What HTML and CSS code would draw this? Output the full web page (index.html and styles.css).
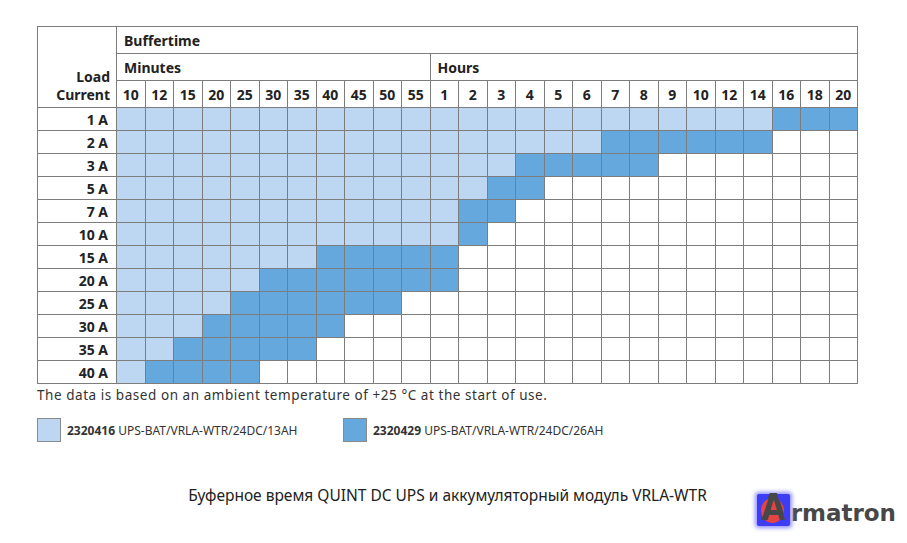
FILE: index.html
```html
<!DOCTYPE html>
<html lang="ru">
<head>
<meta charset="utf-8">
<title>Buffertime</title>
<link rel="stylesheet" href="styles.css">
</head>
<body>
<main class="page">
  <table class="bt">
    <colgroup><col class="col-label"></colgroup>
    <thead>
      <tr class="h1"><th class="load" rowspan="3"><span>Load</span><span>Current</span></th><th class="grp" colspan="26">Buffertime</th></tr>
      <tr class="h2"><th class="grp" colspan="11">Minutes</th><th class="grp" colspan="15">Hours</th></tr>
      <tr class="h3" id="nums"></tr>
    </thead>
    <tbody id="rows"></tbody>
  </table>
  <p class="note">The data is based on an ambient temperature of +25 °C at the start of use.</p>
  <div class="legend">
    <div class="leg"><span class="sw light"></span><span class="lt"><b>2320416</b> UPS-BAT/VRLA-WTR/24DC/13AH</span></div>
    <div class="leg"><span class="sw dark"></span><span class="lt"><b>2320429</b> UPS-BAT/VRLA-WTR/24DC/26AH</span></div>
  </div>
  <footer class="foot">
    <p class="caption">Буферное время QUINT DC UPS и аккумуляторный модуль VRLA-WTR</p>
    <div class="logo"><span class="mark"><span class="ring"></span><span class="letter">A</span></span><span class="word">rmatron</span></div>
  </footer>
</main>
<script>
  var nums = [10,12,15,20,25,30,35,40,45,50,55,1,2,3,4,5,6,7,8,9,10,12,14,16,18,20];
  var rows = [
    ["1 A",23,25],["2 A",17,22],["3 A",14,18],["5 A",13,14],["7 A",12,13],["10 A",12,12],
    ["15 A",7,11],["20 A",5,11],["25 A",4,9],["30 A",3,7],["35 A",2,6],["40 A",1,4]
  ];
  var h = document.getElementById('nums');
  nums.forEach(function(n){ var th=document.createElement('th'); th.className='num'; th.textContent=n; h.appendChild(th); });
  var tb = document.getElementById('rows');
  rows.forEach(function(r){
    var tr=document.createElement('tr');
    var th=document.createElement('th'); th.className='rl'; th.textContent=r[0]; tr.appendChild(th);
    for (var i=0;i<26;i++){
      var td=document.createElement('td');
      td.className = i<r[1] ? 'l' : (i<=r[2] ? 'd' : 'w');
      tr.appendChild(td);
    }
    tb.appendChild(tr);
  });
</script>
</body>
</html>
```

FILE: styles.css
```css
html, body { margin: 0; padding: 0; background: #fff; }
body { font-family: "Noto Sans", "Liberation Sans", sans-serif; color: #222; }
.page { padding: 26px 0 0 37px; width: 870px; height: 543px; box-sizing: border-box; }

.bt { border-collapse: collapse; table-layout: fixed; width: 821px; border: 1px solid #7d7d7d; }
.col-label { width: 79px; }
.bt th, .bt td { border: 1px solid #7d7d7d; padding: 0; }
.bt th { font-weight: 700; font-size: 14px; color: #222; }
.h1 th, .h2 th { height: 26px; }
.h3 th { height: 26px; }
.grp { text-align: left; padding-left: 7px !important; }
.load { text-align: right; vertical-align: bottom; padding: 0 6px 3px 0 !important; line-height: 18px; }
.load span { display: block; }
.num { text-align: center; }
.rl { text-align: right; padding-right: 8px !important; height: 22px; }
td.l { background: #bdd6f1; }
td.d { background: #64a8de; }
td.w { background: #fff; }

.note { margin: 2px 0 0; font-size: 13.5px; letter-spacing: 0.55px; line-height: 18px; color: #333; }

.legend { display: flex; margin-top: 14px; }
.leg { display: flex; align-items: center; gap: 6px; }
.leg:first-child { width: 306px; }
.sw { width: 22px; height: 22px; border: 1px solid #8a8a8a; display: block; }
.sw.light { background: #bdd6f1; }
.sw.dark { background: #64a8de; }
.lt { font-size: 12px; color: #333; }
.lt b { font-weight: 700; }

.foot { display: grid; grid-template-columns: 1fr auto 1fr; margin-top: 42px; margin-left: -37px; width: 907px; }
.caption { grid-column: 2; margin: 0; font-size: 15.5px; color: #222; padding-right: 12px; }
.logo { grid-column: 3; justify-self: end; display: flex; align-items: flex-end; margin-top: 10px; margin-right: 11px; }
.mark { position: relative; width: 33px; height: 32px; background: #3d3df5; box-shadow: 0 0 4px 2px #8f8fff; border-radius: 2px; display: block; }
.ring { position: absolute; left: 4px; top: 4px; width: 23px; height: 25px; border-radius: 50%; background: #e64444; }
.letter { position: absolute; left: 0; right: 0; top: -6px; text-align: center; font-family: "DejaVu Sans", sans-serif; font-weight: 700; font-size: 37px; line-height: 40px; color: #474747; transform: scaleX(0.85); }
.word { font-family: "DejaVu Sans", sans-serif; font-weight: 700; font-size: 23px; line-height: 26px; color: #474747; margin-left: 1px; margin-bottom: 0; }
```
